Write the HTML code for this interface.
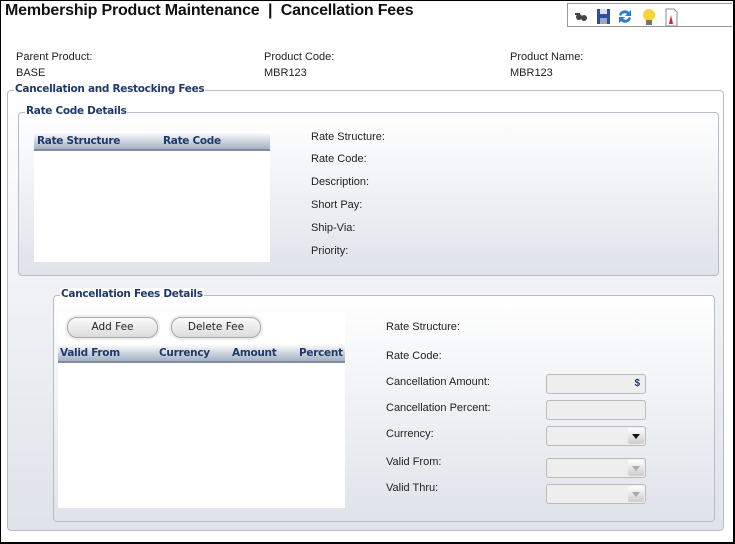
<!DOCTYPE html>
<html><head><style>
*{margin:0;padding:0;box-sizing:border-box}
body{width:735px;height:544px;background:#fff;font-family:"Liberation Sans",sans-serif;font-size:11px;color:#222;position:relative;overflow:hidden}
.frame{position:absolute;left:0;top:0;width:735px;height:544px;border:1px solid #000;border-right:2px solid #000;border-bottom:2px solid #000}
.a{position:absolute;white-space:nowrap}
.title{left:5px;top:2px;font-size:16px;font-weight:bold;color:#111;letter-spacing:-0.2px}
.tb{left:567px;top:3px;width:165px;height:24px;border:1px solid #999;border-right:none;background:#fff}
.fs{position:absolute;border:1px solid #b8bcc4;border-radius:4px;background:linear-gradient(#fff,#dfe3ea)}
.lg{position:absolute;font-family:"DejaVu Sans",sans-serif;font-size:10.5px;font-weight:bold;color:#1f3a6a;background:#fff;padding:0 1px;letter-spacing:-0.3px}
.grid{position:absolute;background:#fff}
.hd{position:absolute;left:0;right:0;height:18px;background:linear-gradient(#fafbfc,#a4b0c2);border-bottom:2px solid #7f8ca3;font-family:"DejaVu Sans",sans-serif;font-weight:bold;font-size:10.5px;color:#1f3a6a;letter-spacing:-0.3px}
.hd span{position:absolute;top:2px}
.btn{position:absolute;height:21px;border:1px solid #aaa;border-radius:10px;background:linear-gradient(#fafafa,#dcdcdc);text-align:center;line-height:19px;font-family:"DejaVu Sans",sans-serif;font-size:10.5px;color:#222;box-shadow:0 0 0 2px #eee}
.in{position:absolute;left:546px;width:100px;height:20px;border:1px solid #bbb;border-radius:3px;background:#eee}
.dd{position:absolute;right:1px;top:1px;width:16px;height:16px;background:linear-gradient(#fff,#ccc);border-radius:2px}
.dd:after{content:"";position:absolute;left:4px;top:6px;border-left:4px solid transparent;border-right:4px solid transparent;border-top:5px solid #111}
.dd.g:after{border-top-color:#aaa}
</style></head><body>
<div class="frame"></div>
<div class="a title">Membership Product Maintenance &nbsp;|&nbsp; Cancellation Fees</div>
<div class="a tb">
<svg width="110" height="22" style="position:absolute;left:2px;top:1px">
<g fill="#444"><circle cx="9" cy="12" r="3"/><circle cx="14" cy="13" r="3"/><rect x="5" y="8" width="5" height="2"/></g>
<rect x="27" y="4" width="13" height="15" fill="#2a4fa8"/><rect x="30" y="4" width="7" height="5" fill="#dde"/><rect x="30" y="13" width="7" height="6" fill="#9ab"/>
<path d="M49 10a6 6 0 0 1 10-3l2-2v6h-6l2-2a4 4 0 0 0-6 2z M61 13a6 6 0 0 1-10 3l-2 2v-6h6l-2 2a4 4 0 0 0 6-2z" fill="#2e7ad0"/>
<circle cx="79" cy="10" r="6" fill="#f6d43a"/><rect x="76" y="15" width="6" height="5" fill="#776"/>
<path d="M96 4h8l3 3v14h-11z" fill="#fff" stroke="#889"/><path d="M99 19l2-9 2 9z" fill="#d22"/>
</svg></div>
<div class="a" style="left:16px;top:51px">Parent Product:</div>
<div class="a" style="left:16px;top:67px">BASE</div>
<div class="a" style="left:264px;top:51px">Product Code:</div>
<div class="a" style="left:264px;top:67px">MBR123</div>
<div class="a" style="left:510px;top:51px">Product Name:</div>
<div class="a" style="left:510px;top:67px">MBR123</div>

<div class="fs" style="left:7px;top:90px;width:717px;height:441px"></div>
<div class="lg" style="left:14px;top:83px">Cancellation and Restocking Fees</div>

<div class="fs" style="left:18px;top:112px;width:701px;height:164px"></div>
<div class="lg" style="left:25px;top:105px">Rate Code Details</div>
<div class="grid" style="left:34px;top:131px;width:236px;height:131px"><div class="hd" style="top:2px"><span style="left:3px">Rate Structure</span><span style="left:129px">Rate Code</span></div></div>
<div class="a" style="left:311px;top:131px">Rate Structure:</div>
<div class="a" style="left:311px;top:153px">Rate Code:</div>
<div class="a" style="left:311px;top:176px">Description:</div>
<div class="a" style="left:311px;top:199px">Short Pay:</div>
<div class="a" style="left:311px;top:222px">Ship-Via:</div>
<div class="a" style="left:311px;top:245px">Priority:</div>

<div class="fs" style="left:53px;top:295px;width:662px;height:227px"></div>
<div class="lg" style="left:60px;top:288px">Cancellation Fees Details</div>
<div class="grid" style="left:58px;top:312px;width:287px;height:196px">
<div class="btn" style="left:9px;top:5px;width:91px">Add Fee</div>
<div class="btn" style="left:113px;top:5px;width:90px">Delete Fee</div>
<div class="hd" style="top:33px"><span style="left:2px">Valid From</span><span style="left:101px">Currency</span><span style="left:174px">Amount</span><span style="left:241px">Percent</span></div>
</div>
<div class="a" style="left:386px;top:321px">Rate Structure:</div>
<div class="a" style="left:386px;top:350px">Rate Code:</div>
<div class="a" style="left:386px;top:376px">Cancellation Amount:</div>
<div class="a" style="left:386px;top:402px">Cancellation Percent:</div>
<div class="a" style="left:386px;top:428px">Currency:</div>
<div class="a" style="left:386px;top:456px">Valid From:</div>
<div class="a" style="left:386px;top:482px">Valid Thru:</div>
<div class="in" style="top:374px"><span style="position:absolute;right:5px;top:3px;font-weight:bold;color:#1f3a6a;font-size:10px">$</span></div>
<div class="in" style="top:400px"></div>
<div class="in" style="top:426px"><div class="dd"></div></div>
<div class="in" style="top:458px"><div class="dd g"></div></div>
<div class="in" style="top:484px"><div class="dd g"></div></div>
</body></html>
